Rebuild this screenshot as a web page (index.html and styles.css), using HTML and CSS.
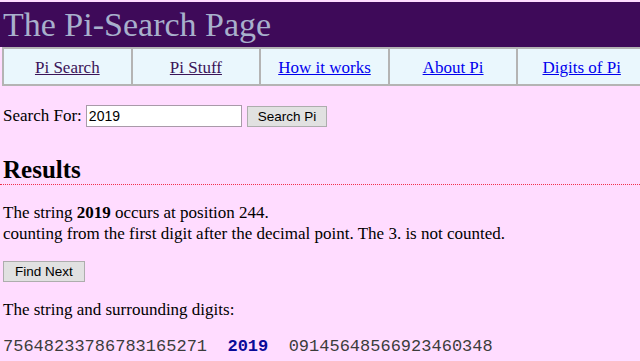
FILE: index.html
```html
<!DOCTYPE html>
<html lang="en">
<head>
<meta charset="UTF-8">
<meta name="viewport" content="width=device-width, initial-scale=1.0">
<title>The Pi-Search Page</title>
<link rel="stylesheet" href="styles.css">
</head>
<body>

<div class="masthead">The Pi-Search Page</div>

<table class="nav">
    <tr>
        <td><a class="visited" href="#">Pi Search</a></td>
        <td><a class="visited" href="#">Pi Stuff</a></td>
        <td><a href="#">How it works</a></td>
        <td><a href="#">About Pi</a></td>
        <td><a href="#">Digits of Pi</a></td>
    </tr>
</table>

<div class="content">
    <form class="search" onsubmit="return false">
        <label for="query">Search For:</label>
        <input type="text" id="query" value="2019">
        <button type="submit">Search Pi</button>
    </form>

    <h2 class="results-title">Results</h2>

    <p class="result">The string <b>2019</b> occurs at position 244.<br>
    counting from the first digit after the decimal point. The 3. is not counted.</p>

    <button type="button" class="find-next">Find Next</button>

    <p class="result">The string and surrounding digits:</p>

    <p class="digits">75648233786783165271  <b>2019</b>  09145648566923460348</p>
</div>

</body>
</html>
```

FILE: styles.css
```css
html {
    overflow: hidden;
}
body {
    margin: 0;
    padding-top: 2px;
    background: #ffdcff;
    font-family: "Liberation Serif", "Times New Roman", serif;
    font-size: 17px;
    color: #000;
}
.masthead {
    background: #3e0a59;
    color: #a8b0cc;
    font-size: 34px;
    height: 45px;
    line-height: 45px;
    padding-left: 3px;
}
.nav {
    border-collapse: collapse;
    width: 645px;
    margin-left: 2px;
    background: #eaf7fd;
    table-layout: fixed;
}
.nav td {
    border: 2px solid #b4b4b4;
    text-align: center;
    height: 37px;
    padding: 3px 0 0;
    box-sizing: border-box;
}
.nav a {
    color: #0000ee;
}
.nav a.visited {
    color: #3b1458;
}
.content {
    padding: 0 3px;
}
.search {
    margin: 19px 0 0;
    display: flex;
    align-items: center;
}
.search label {
    margin-right: 4px;
}
input[type="text"] {
    width: 156px;
    height: 22px;
    box-sizing: border-box;
    border: 1px solid #a99aa9;
    padding: 1px 2px;
    font-family: "Liberation Sans", Arial, sans-serif;
    font-size: 14px;
    margin: 0 5px 0 0;
}
button {
    font-family: "Liberation Sans", Arial, sans-serif;
    font-size: 13.5px;
    background: #e1e1e1;
    border: 1px solid #adadad;
    padding: 1px 10px;
    height: 21px;
    margin: 0;
    color: #000;
}
.find-next {
    padding: 1px 11px;
}
.results-title {
    font-size: 25px;
    margin: 29px -3px 0;
    padding: 0 3px;
    border-bottom: 1px dotted #f0304c;
}
.result {
    margin: 17px 0;
    line-height: 21px;
}
.digits {
    font-family: "Liberation Mono", "Courier New", monospace;
    font-size: 17px;
    color: #3c3c3c;
    white-space: pre;
    margin: 14px 0 0;
}
.digits b {
    color: #0a0a99;
}
```
